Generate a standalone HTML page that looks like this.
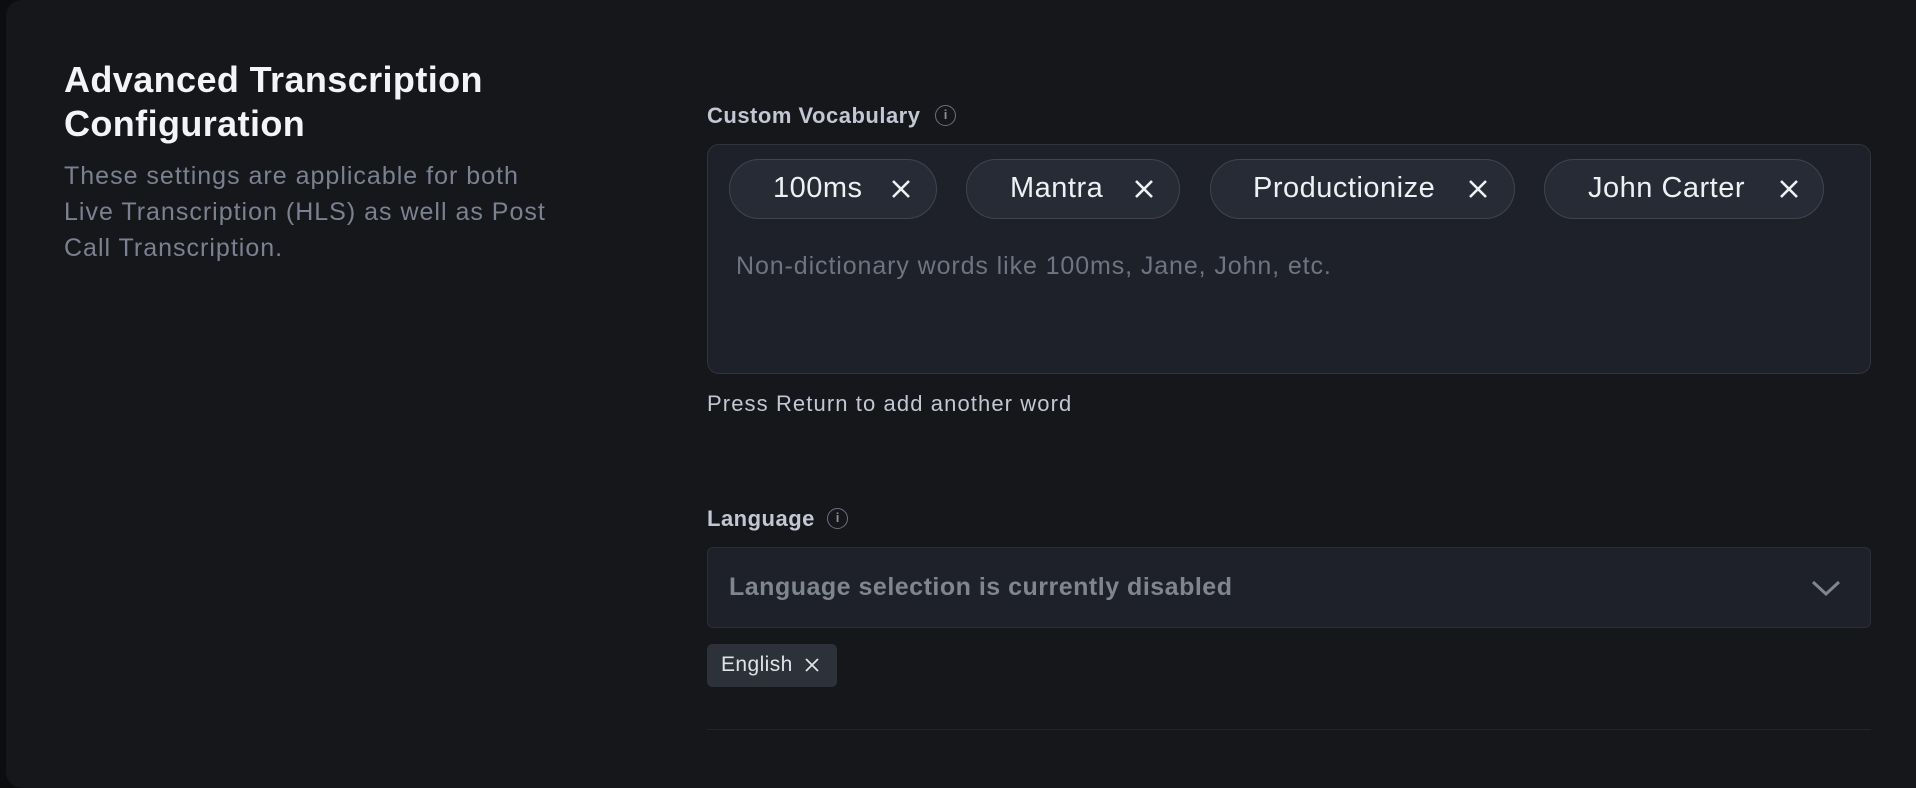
<!DOCTYPE html>
<html><head><meta charset="utf-8"><style>
*{margin:0;padding:0;box-sizing:border-box}
body{width:1916px;height:788px;background:#0c0d0f;font-family:"Liberation Sans",sans-serif;overflow:hidden;position:relative}
.card{position:absolute;left:6px;top:0;width:1910px;height:788px;background:#16171b;border-radius:16px 0 0 16px}
.a{position:absolute;white-space:nowrap}
h1{position:absolute;left:64px;top:58px;font-size:36px;line-height:44px;color:#f2f4f8;font-weight:bold;letter-spacing:.4px}
.desc{position:absolute;left:64px;top:158px;font-size:25px;line-height:36px;color:#7b8190;letter-spacing:1px}
.lbl{font-size:22px;font-weight:bold;color:#c2c7d3;letter-spacing:.5px}
.info{position:absolute;width:21px;height:21px;border:1.5px solid #6b7080;border-radius:50%;color:#8a8f9c;font-size:13px;text-align:center;line-height:18px;font-weight:bold}
.box{position:absolute;left:707px;top:144px;width:1164px;height:230px;background:#1e2129;border:1.5px solid #30343c;border-radius:12px}
.chip{position:absolute;top:159px;height:60px;background:#272b35;border:1.5px solid #40444c;border-radius:30px;color:#eef0f4;font-size:29px;line-height:57px;letter-spacing:.5px}
.chip span{position:absolute}
.x{position:absolute;top:18px}
</style></head><body>
<div class="card"></div>
<h1>Advanced Transcription<br>Configuration</h1>
<div class="desc">These settings are applicable for both<br>Live Transcription (HLS) as well as Post<br>Call Transcription.</div>

<div class="a lbl" style="left:707px;top:103px">Custom Vocabulary</div>
<div class="info" style="left:935px;top:105px">i</div>
<div class="box"></div>
<div class="chip" style="left:729px;width:208px"><span style="left:43px">100ms</span><svg class="x" style="left:160px" width="22" height="22"><path d="M3 3L19 19M19 3L3 19" stroke="#eef0f4" stroke-width="2.6"/></svg></div>
<div class="chip" style="left:966px;width:214px"><span style="left:43px">Mantra</span><svg class="x" style="left:166px" width="22" height="22"><path d="M3 3L19 19M19 3L3 19" stroke="#eef0f4" stroke-width="2.6"/></svg></div>
<div class="chip" style="left:1210px;width:305px"><span style="left:42px">Productionize</span><svg class="x" style="left:256px" width="22" height="22"><path d="M3 3L19 19M19 3L3 19" stroke="#eef0f4" stroke-width="2.6"/></svg></div>
<div class="chip" style="left:1544px;width:280px"><span style="left:43px">John Carter</span><svg class="x" style="left:233px" width="22" height="22"><path d="M3 3L19 19M19 3L3 19" stroke="#eef0f4" stroke-width="2.6"/></svg></div>
<div class="a" style="left:736px;top:252px;font-size:25px;color:#6e7482;letter-spacing:.9px">Non-dictionary words like 100ms, Jane, John, etc.</div>
<div class="a" style="left:707px;top:391px;font-size:22px;color:#c2c7d3;letter-spacing:1.1px">Press Return to add another word</div>

<div class="a lbl" style="left:707px;top:506px">Language</div>
<div class="info" style="left:827px;top:508px">i</div>
<div class="a" style="left:707px;top:547px;width:1164px;height:81px;background:#1e2129;border:1.5px solid #2a2e36;border-radius:6px"></div>
<div class="a" style="left:729px;top:573px;font-size:25px;font-weight:bold;color:#80868f;letter-spacing:.5px">Language selection is currently disabled</div>
<svg class="a" style="left:1810px;top:578px" width="32" height="20"><path d="M3 4L16 16L29 4" fill="none" stroke="#80868f" stroke-width="3"/></svg>
<div class="a" style="left:707px;top:644px;width:130px;height:43px;background:#2d313a;border-radius:5px"></div>
<div class="a" style="left:721px;top:653px;font-size:21px;color:#dfe2e8;letter-spacing:.4px">English</div>
<svg class="a" style="left:804px;top:657px" width="16" height="16"><path d="M2 2L14 14M14 2L2 14" stroke="#dfe2e8" stroke-width="1.8"/></svg>
<div class="a" style="left:707px;top:729px;width:1164px;height:1px;background:#22252b"></div>
</body></html>
